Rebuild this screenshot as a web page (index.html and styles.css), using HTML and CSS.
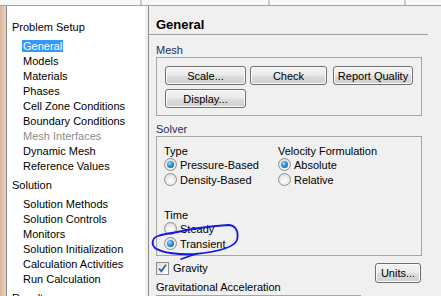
FILE: index.html
```html
<!DOCTYPE HTML>
<html>
  <head>
    <title>General | Problem Setup</title>
    <meta charset="utf-8" />
    <link rel="stylesheet" href="styles.css">
  </head>
  <body>
    <div class="topbar">
      <span class="sep s1"></span>
      <span class="sep s2"></span>
      <span class="sep s3"></span>
    </div>
    <div class="main">
      <div class="edge"></div>
      <nav class="tree">
        <div class="cat">Problem Setup</div>
        <ul class="items">
          <li><span class="sel">General</span></li>
          <li>Models</li>
          <li>Materials</li>
          <li>Phases</li>
          <li>Cell Zone Conditions</li>
          <li>Boundary Conditions</li>
          <li class="off">Mesh Interfaces</li>
          <li>Dynamic Mesh</li>
          <li>Reference Values</li>
        </ul>
        <div class="cat">Solution</div>
        <ul class="items">
          <li>Solution Methods</li>
          <li>Solution Controls</li>
          <li>Monitors</li>
          <li>Solution Initialization</li>
          <li>Calculation Activities</li>
          <li>Run Calculation</li>
        </ul>
        <div class="cat">Results</div>
      </nav>
      <section class="panel">
        <h1 class="title">General</h1>
        <div class="group-label">Mesh</div>
        <div class="box mesh-box">
          <div class="btn-row">
            <button class="btn scale">Scale...</button>
            <button class="btn check">Check</button>
            <button class="btn quality">Report Quality</button>
          </div>
          <div class="btn-row">
            <button class="btn scale">Display...</button>
          </div>
        </div>
        <div class="group-label solver-label">Solver</div>
        <div class="box solver-box">
          <div class="solver-cols">
            <div class="col col-type">
              <div class="opt-title">Type</div>
              <div class="opt"><span class="radio on"></span>Pressure-Based</div>
              <div class="opt"><span class="radio"></span>Density-Based</div>
            </div>
            <div class="col">
              <div class="opt-title">Velocity Formulation</div>
              <div class="opt"><span class="radio on"></span>Absolute</div>
              <div class="opt"><span class="radio"></span>Relative</div>
            </div>
          </div>
          <div class="col col-time">
            <div class="opt-title">Time</div>
            <div class="opt"><span class="radio"></span>Steady</div>
            <div class="opt"><span class="radio on"></span>Transient</div>
          </div>
        </div>
        <div class="gravity-row">
          <div class="check-opt">
            <span class="checkbox">
              <svg width="11" height="11" viewBox="0 0 11 11">
                <path d="M2 5.5 L4.3 8.2 L9 1.8" fill="none" stroke="#3d5d9e" stroke-width="1.8" />
              </svg>
            </span>
            Gravity
          </div>
          <button class="btn units">Units...</button>
        </div>
        <div class="group-label plain accel-label">Gravitational Acceleration</div>
        <div class="box accel-box"></div>
      </section>
    </div>
    <svg class="mark" width="441" height="296" viewBox="0 0 441 296">
      <path d="M172 233 C190 229, 214 226, 228 225 C236 225, 239 232, 237 240 C234 248, 215 252, 195 254 C180 255, 162 253, 155 248 C151 244, 152 238, 158 236 C163 234, 170 233, 178 232" fill="none" stroke="#1717e2" stroke-width="1.8" stroke-linecap="round" />
      <path d="M196 254 C189 256, 185 258, 181 259" fill="none" stroke="#1717e2" stroke-width="1.8" stroke-linecap="round" />
    </svg>
  </body>
</html>
```

FILE: styles.css
```css
html, body {
  margin: 0;
  width: 441px;
  height: 296px;
  overflow: hidden;
}
body {
  position: relative;
  background: #f0f0f0;
  font-family: "Liberation Sans", Arial, sans-serif;
  font-size: 11px;
  color: #000;
}
.topbar {
  position: relative;
  height: 5px;
  background: #f7f8fa;
  border-bottom: 1px solid #a3a3a3;
}
.topbar .sep {
  position: absolute;
  top: 0;
  width: 2px;
  height: 5px;
  background: #c9cdd2;
}
.topbar .s1 { left: 140px; }
.topbar .s2 { left: 268px; }
.topbar .s3 { left: 404px; }
.main {
  display: flex;
  height: 290px;
}
.edge {
  width: 6px;
  background: linear-gradient(to right, #d9b59b, #ebd2bf);
}
.tree {
  width: 138px;
  margin-right: 3px;
  padding-top: 10px;
  background: #fff;
  border-left: 1px solid #8a8a8a;
}
.cat {
  margin: 4px 0;
  padding-left: 5px;
  line-height: 15px;
}
.items {
  list-style: none;
  margin: 0;
  padding: 0 0 0 16px;
}
.items li {
  line-height: 15px;
  white-space: nowrap;
}
.items .off {
  color: #8d8d8d;
}
.sel {
  margin-left: -1px;
  padding: 0 1px;
  background: #3399ff;
  color: #fff;
}
.panel {
  flex: 1;
  border-left: 1px solid #8c8c8c;
}
.title {
  margin: 0 13px 0 0;
  padding: 11px 0 1px 7px;
  font-size: 13px;
  line-height: 16px;
  font-weight: bold;
  border-bottom: 1px solid #a0a0a0;
}
.group-label {
  margin-top: 9px;
  padding-left: 7px;
  line-height: 13px;
  color: #1c2d62;
}
.group-label.solver-label {
  margin-top: 7px;
}
.group-label.plain {
  color: #000;
}
.accel-label {
  margin-top: -2px !important;
}
.box {
  box-sizing: border-box;
  margin-left: 7px;
  width: 266px;
  border: 1px solid #a6a6a6;
}
.mesh-box {
  padding: 8px 0 7px 8px;
}
.btn-row {
  display: flex;
}
.btn-row + .btn-row {
  margin-top: 4px;
}
.btn {
  box-sizing: border-box;
  height: 19px;
  padding: 0;
  border: 1px solid #707070;
  border-radius: 3px;
  background: linear-gradient(#f3f3f3 0%, #ebebeb 48%, #dddddd 52%, #d0d0d0 100%);
  box-shadow: inset 0 0 0 1px #fbfbfb;
  font-family: inherit;
  font-size: 11px;
  color: #000;
}
.btn.scale { width: 81px; }
.btn.check { width: 77px; margin-left: 4px; }
.btn.quality { width: 80px; margin-left: 6px; }
.solver-box {
  height: 120px;
  padding: 8px 0 0 7px;
}
.solver-cols {
  display: flex;
}
.col-type {
  width: 114px;
}
.col-time {
  margin-top: 22px;
}
.opt-title {
  line-height: 12px;
}
.opt {
  display: flex;
  align-items: center;
  height: 15px;
  gap: 3px;
  white-space: nowrap;
}
.radio {
  position: relative;
  box-sizing: border-box;
  width: 13px;
  height: 13px;
  border: 1px solid #8e8f8f;
  border-radius: 50%;
  background: radial-gradient(circle at 50% 60%, #ffffff 0%, #f0f0f0 40%, #d2d2d2 100%);
}
.radio.on::after {
  content: "";
  position: absolute;
  left: 2px;
  top: 2px;
  width: 7px;
  height: 7px;
  border-radius: 50%;
  background: radial-gradient(circle at 40% 35%, #9fe0ff 0%, #2a8fd8 45%, #0d4f8f 100%);
}
.gravity-row {
  display: flex;
  justify-content: space-between;
  align-items: flex-start;
  margin: 7px 20px 0 7px;
}
.check-opt {
  display: flex;
  align-items: center;
  gap: 4px;
  margin-top: -1px;
  line-height: 13px;
}
.checkbox {
  box-sizing: border-box;
  display: flex;
  align-items: center;
  justify-content: center;
  width: 13px;
  height: 13px;
  border: 1px solid #8e8f8f;
  background: linear-gradient(135deg, #dcdcdc, #ffffff);
}
.btn.units {
  width: 46px;
  height: 20px;
}
.accel-box {
  width: 205px;
  height: 20px;
  margin-top: 1px;
}
.mark {
  position: absolute;
  left: 0;
  top: 0;
  pointer-events: none;
}
```
